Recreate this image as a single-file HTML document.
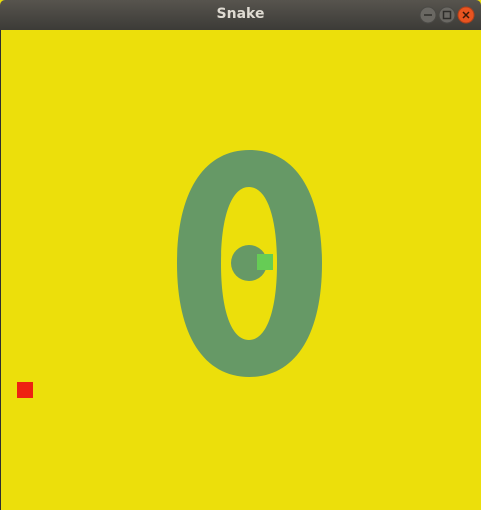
<!DOCTYPE html>
<html><head><style>
html,body{margin:0;padding:0;width:481px;height:510px;overflow:hidden;background:#ecdf0b}
.tb{position:absolute;left:0;top:0;width:481px;height:30px;background:linear-gradient(#57544e,#3c3b37);border-radius:5px 5px 0 0;}
.t{position:absolute;left:0;width:481px;top:6px;text-align:center;color:#dfdbd2;font:bold 14px "DejaVu Sans","Liberation Sans",sans-serif}
.lb{position:absolute;left:0;top:30px;width:1px;height:480px;background:#2f2f2f}
</style></head><body>
<div class="tb"><div class="t">Snake</div>
<svg width="481" height="30" style="position:absolute;left:0;top:0">
<circle cx="428" cy="15" r="8" fill="#6a6863" stroke="#4a4945"/>
<line x1="424" y1="15" x2="432" y2="15" stroke="#2e2d2a" stroke-width="1.5"/>
<circle cx="447" cy="15" r="8" fill="#6a6863" stroke="#4a4945"/>
<rect x="443.5" y="11.5" width="7" height="7" fill="none" stroke="#2e2d2a" stroke-width="1.5"/>
<circle cx="466" cy="15" r="8" fill="#e95420" stroke="#b0401a"/>
<path d="M463 12L469 18M469 12L463 18" stroke="#3a1a0a" stroke-width="1.5"/>
</svg></div>
<div class="lb"></div>
<svg width="481" height="480" style="position:absolute;left:0;top:30px">
<path fill-rule="evenodd" fill="#669966" d="M249.5 120 C295.2 120 322 162 322 233.5 C322 305 295.2 347 249.5 347 C203.8 347 177 305 177 233.5 C177 162 203.8 120 249.5 120Z M249 157 C266.4 157 277 186 277 233.5 C277 281 266.4 310 249 310 C231.6 310 221 281 221 233.5 C221 186 231.6 157 249 157Z"/>
<circle cx="249" cy="233" r="18" fill="#669966"/>
<rect x="257" y="224" width="16" height="16" fill="#66cc55"/>
<rect x="17" y="352" width="16" height="16" fill="#ee2211"/>
</svg>
</body></html>
